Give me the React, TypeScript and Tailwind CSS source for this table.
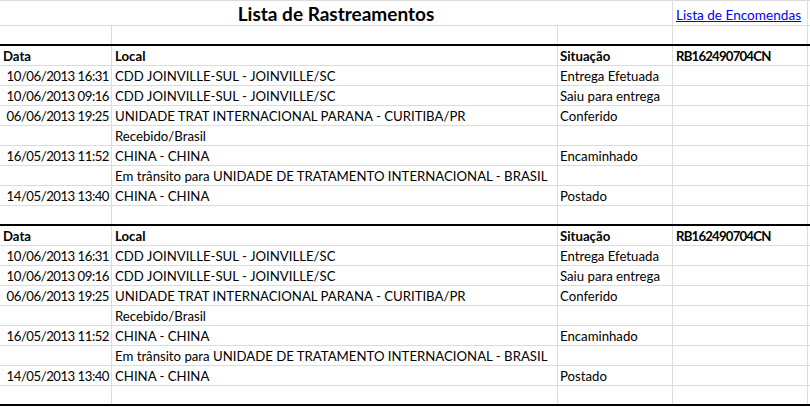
import React from "react";

interface Evento {
    data: string;
    local: string;
    situacao: string;
}

const eventos: Array<Evento> = [
    { data: "10/06/2013 16:31", local: "CDD JOINVILLE-SUL - JOINVILLE/SC", situacao: "Entrega Efetuada" },
    { data: "10/06/2013 09:16", local: "CDD JOINVILLE-SUL - JOINVILLE/SC", situacao: "Saiu para entrega" },
    { data: "06/06/2013 19:25", local: "UNIDADE TRAT INTERNACIONAL PARANA - CURITIBA/PR", situacao: "Conferido" },
    { data: "", local: "Recebido/Brasil", situacao: "" },
    { data: "16/05/2013 11:52", local: "CHINA - CHINA", situacao: "Encaminhado" },
    { data: "", local: "Em trânsito para UNIDADE DE TRATAMENTO INTERNACIONAL - BRASIL", situacao: "" },
    { data: "14/05/2013 13:40", local: "CHINA - CHINA", situacao: "Postado" },
];

const cell = "shrink-0 h-full border-r border-[#dadcdd] flex items-end overflow-hidden whitespace-nowrap";

const Row: React.FC<{ a?: string; b?: string; c?: string; d?: string; bold?: boolean; black?: boolean }> = ({ a = "", b = "", c = "", d = "", bold, black }) => (
    <div className={`flex h-[20px] border-b ${black ? "border-b-2 border-black" : "border-[#dadcdd]"} ${bold ? "font-bold" : ""}`}>
        <div className={`${cell} w-[112px] ${bold ? "pl-[3px]" : "justify-end pr-[2px] tracking-[-0.5px]"}`}>{a}</div>
        <div className={`${cell} w-[446px] pl-[3px]`}>{b}</div>
        <div className={`${cell} w-[115px] pl-[2px]`}>{c}</div>
        <div className={`${cell} w-[135px] pl-[3px] tracking-[-0.8px]`}>{d}</div>
    </div>
);

const Bloco: React.FC = () => (
    <>
        <Row a="Data" b="Local" c="Situação" d="RB162490704CN" bold />
        {eventos.map((e, i) => (
            <Row key={i} a={e.data} b={e.local} c={e.situacao} />
        ))}
        <Row black />
    </>
);

export default function App() {
    return (
        <div className="w-[810px] h-[407px] bg-white overflow-hidden text-black text-[13.2px] leading-[17px]" style={{ fontFamily: "Lato, 'Liberation Sans', sans-serif" }}>
            <div className="border-t border-[#dadcdd]">
                <div className="flex h-[25px] border-b border-[#dadcdd]">
                    <div className="shrink-0 w-[673px] h-full border-r border-[#dadcdd] flex items-end justify-center font-bold text-[19px] leading-[22px]">
                        Lista de Rastreamentos
                    </div>
                    <div className="shrink-0 w-[135px] h-full border-r border-[#dadcdd] flex items-end pb-[1px] pl-[3px] whitespace-nowrap overflow-hidden text-[13.6px]">
                        <a href="#" className="text-[#0000ff] underline">Lista de Encomendas</a>
                    </div>
                </div>
                <Row black />
                <Bloco />
                <Bloco />
            </div>
        </div>
    );
}
